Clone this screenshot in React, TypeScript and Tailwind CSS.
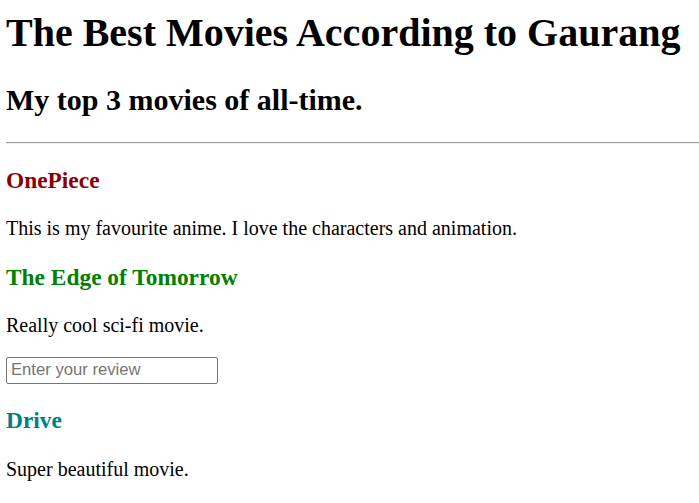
import React from "react";

export default function App() {
  return (
    <div className="min-h-[503px] w-[699px] overflow-hidden bg-white pl-[6px] pt-[10px] font-['Liberation_Serif','Times_New_Roman',serif] text-black">
      <h1 className="m-0 text-[40px] font-bold leading-[46px]">The Best Movies According to Gaurang</h1>
      <h2 className="mt-[26.8px] text-[30px] font-bold leading-[34.5px]">My top 3 movies of all-time.</h2>
      <hr className="mt-[24.4px] h-[2px] border-0 border-t border-b border-t-[#9a9a9a] border-b-[#eeeeee]" />
      <h3 className="mt-[23.4px] text-[23.4px] font-bold leading-[27px] text-[#8b0000]">OnePiece</h3>
      <p className="mt-[23.4px] text-[20px] leading-[23px]">This is my favourite anime. I love the characters and animation.</p>
      <h3 className="mt-[23.4px] text-[23.4px] font-bold leading-[27px] text-[#008000]">The Edge of Tomorrow</h3>
      <p className="mt-[23.4px] text-[20px] leading-[23px]">Really cool sci-fi movie.</p>
      <div className="mt-[19.4px] flex">
        <input
          type="text"
          placeholder="Enter your review"
          className="h-[27px] w-[212px] rounded-[2px] border border-[#767676] pl-[4px] pr-[3px] font-['Liberation_Sans',Arial,sans-serif] text-[16.67px] text-black placeholder:text-[#757575] outline-none"
        />
      </div>
      <h3 className="mt-[23.4px] text-[23.4px] font-bold leading-[27px] text-[#008080]">Drive</h3>
      <p className="mt-[24.4px] text-[20px] leading-[23px]">Super beautiful movie.</p>
    </div>
  );
}
